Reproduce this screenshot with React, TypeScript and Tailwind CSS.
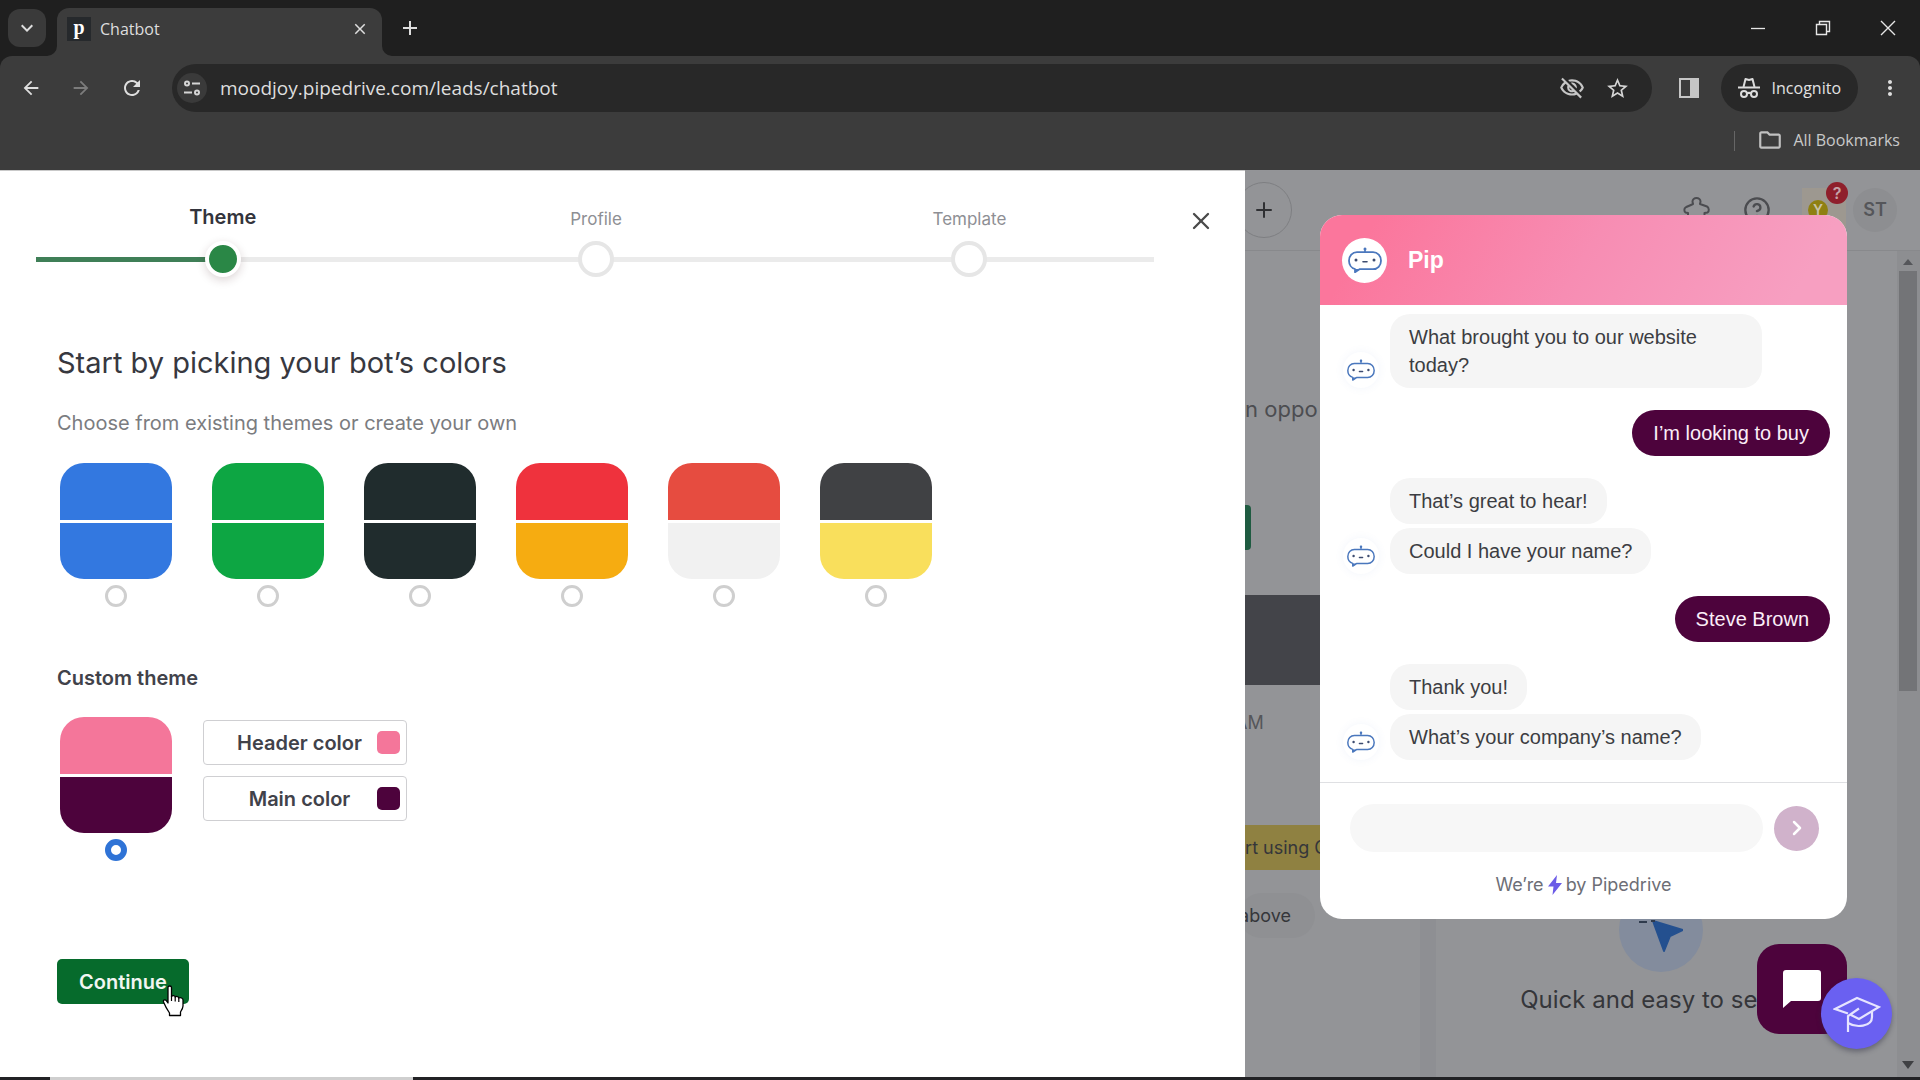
import { useState } from "react";
import type { ReactNode } from "react";
import {
  MdAdd,
  MdArrowBack,
  MdArrowForward,
  MdClose,
  MdExpandMore,
  MdMoreVert,
  MdOutlineFolder,
  MdOutlineVisibilityOff,
  MdRefresh,
  MdStarBorder,
} from "react-icons/md";
import { ChevronRight, CircleHelp, Plus, X } from "lucide-react";

function Robot({ className }: { className: string }) {
  return (
    <svg viewBox="0 0 34 26" className={className} fill="none" aria-hidden="true">
      <path d="M17 1.500v3.500" stroke="#4a77bd" strokeWidth="1.600" strokeLinecap="round" />
      <circle cx="17" cy="1.900" r="1.500" fill="#4a77bd" />
      <path
        d="M9 5.200h16c4.600 0 8 3.600 8 8.500s-3.400 8.500-8 8.500H11.500L7 25.200v-3.200C3.500 21 1 17.600 1 13.700c0-4.900 3.400-8.500 8-8.500z"
        stroke="#4a77bd"
        strokeWidth="1.800"
        strokeLinejoin="round"
      />
      <path d="M7 22h5l-5 3.200z" fill="#4a77bd" />
      <circle cx="8" cy="13" r="1.500" fill="#3d4c70" />
      <circle cx="26" cy="13" r="1.500" fill="#3d4c70" />
      <path d="M15 14.800h4" stroke="#3d4c70" strokeWidth="1.600" strokeLinecap="round" />
    </svg>
  );
}

function SiteControlsIcon() {
  return (
    <svg viewBox="0 0 20 20" className="size-5" fill="none" stroke="#d5d5d5" strokeWidth="2" aria-hidden="true">
      <circle cx="5" cy="5.500" r="2" />
      <path d="M10 5.500h8M2 14.500h8" />
      <circle cx="15" cy="14.500" r="2" />
    </svg>
  );
}

function IncognitoIcon() {
  return (
    <svg viewBox="0 0 22 22" className="size-[22px]" fill="none" stroke="#dcdcdc" strokeWidth="2" aria-hidden="true">
      <path d="M0 10.500h22" />
      <path d="M5.500 10L7.500 2l3.500 1 3.500-1L16.500 10" strokeLinejoin="round" />
      <circle cx="6" cy="17" r="3" />
      <circle cx="16" cy="17" r="3" />
      <path d="M8.800 16.500c1.400-.8 3-.8 4.400 0" />
    </svg>
  );
}

function SidePanelIcon() {
  return (
    <svg viewBox="0 0 22 22" className="size-[22px]" aria-hidden="true">
      <rect x="2" y="2" width="18" height="18" fill="none" stroke="#c6c6c6" strokeWidth="2" />
      <rect x="12" y="2" width="8" height="18" fill="#c6c6c6" />
    </svg>
  );
}

function PuzzleIcon() {
  return (
    <svg viewBox="0 0 28 28" className="size-7" fill="none" stroke="currentColor" strokeWidth="2" aria-hidden="true">
      <path
        d="M10 8c0-1-.5-1.500-.5-2.500C9.500 3.500 11.300 2 13.500 2s4 1.500 4 3.500c0 1-.5 1.500-.5 2.500l7 2.500c2 1 2.500 5 .5 6l-3 .5v8H5v-8l-2.500-.5c-1.500-1-1.500-4 0-5C4 10.500 7 9.500 10 8z"
        strokeLinejoin="round"
      />
    </svg>
  );
}

function PipedriveIcon() {
  return (
    <span className="flex size-6 items-center justify-center bg-[#26292c] pb-1 font-['Liberation_Serif',serif] text-xl leading-5 font-bold text-white">
      p
    </span>
  );
}

function Flare({ className }: { className: string }) {
  return (
    <svg viewBox="0 0 10 10" className={className} aria-hidden="true">
      <path d="M10 0v10H0A10 10 0 0 0 10 0z" fill="#3c3c3c" />
    </svg>
  );
}

function BrowserChrome() {
  return (
    <header className="bg-[#1f1f1f] font-['Open_Sans','Noto_Sans',sans-serif] text-[#dedede]">
      <div className="flex h-14 items-center">
        <button
          type="button"
          aria-label="Search tabs"
          className="ml-2 flex h-[38px] w-[38px] items-center justify-center rounded-xl bg-[#3a3a3a]"
        >
          <MdExpandMore className="size-6" />
        </button>
        <div className="relative ml-[11px] flex h-12 w-[325px] items-center self-end rounded-t-xl bg-[#3c3c3c] pr-[13px] pb-[6px] pl-[10px]">
          <Flare className="absolute bottom-0 -left-[10px] size-[10px]" />
          <Flare className="absolute -right-[10px] bottom-0 size-[10px] -scale-x-100" />
          <PipedriveIcon />
          <span className="ml-[9px] flex-1 text-base">Chatbot</span>
          <button type="button" aria-label="Close tab">
            <MdClose className="size-[18px]" />
          </button>
        </div>
        <button type="button" aria-label="New tab" className="ml-4">
          <MdAdd className="size-6" />
        </button>
        <div className="ml-auto flex items-center gap-[49px] pr-6">
          <button type="button" aria-label="Minimize">
            <svg viewBox="0 0 16 16" className="size-4" stroke="#e6e6e6" strokeWidth="1.300">
              <path d="M1 8.500h14" />
            </svg>
          </button>
          <button type="button" aria-label="Restore">
            <svg viewBox="0 0 16 16" className="size-4" fill="none" stroke="#e6e6e6" strokeWidth="1.400">
              <path d="M1.500 4.500h10v10h-10zM4.500 4.500v-3h10v10h-3" />
            </svg>
          </button>
          <button type="button" aria-label="Close window">
            <svg viewBox="0 0 16 16" className="size-4" stroke="#e6e6e6" strokeWidth="1.400">
              <path d="M1 1l14 14M15 1L1 15" />
            </svg>
          </button>
        </div>
      </div>
      <div className="rounded-t-xl bg-[#3c3c3c]">
        <div className="flex h-16 items-center pr-[18px] pl-5">
          <button type="button" aria-label="Back">
            <MdArrowBack className="size-[22px]" />
          </button>
          <button type="button" aria-label="Forward" className="ml-7" disabled>
            <MdArrowForward className="size-[22px] text-[#7c7c7c]" />
          </button>
          <button type="button" aria-label="Reload" className="ml-7">
            <MdRefresh className="size-6" />
          </button>
          <div className="ml-7 flex h-12 flex-1 items-center rounded-full bg-[#282828] pr-[22px] pl-[5px]">
            <button
              type="button"
              aria-label="View site information"
              className="flex size-[30px] items-center justify-center rounded-full bg-[#3a3a3a]"
            >
              <SiteControlsIcon />
            </button>
            <input
              aria-label="Address"
              className="ml-[13px] flex-1 bg-transparent text-[19px] text-[#dedede] outline-none"
              defaultValue="moodjoy.pipedrive.com/leads/chatbot"
            />
            <MdOutlineVisibilityOff className="size-[26px] text-[#c6c6c6]" />
            <button type="button" aria-label="Bookmark this tab" className="ml-5">
              <MdStarBorder className="size-[25px] text-[#d6d6d6]" />
            </button>
          </div>
          <button type="button" aria-label="Side panel" className="ml-[26px]">
            <SidePanelIcon />
          </button>
          <button
            type="button"
            className="ml-[21px] flex h-12 items-center gap-3 rounded-full bg-[#282828] px-[17px] text-base text-[#e2e2e2]"
          >
            <IncognitoIcon />
            Incognito
          </button>
          <button type="button" aria-label="Menu" className="ml-5">
            <MdMoreVert className="size-6" />
          </button>
        </div>
        <div className="flex h-[50px] items-start justify-end pt-[7px] pr-5">
          <span className="mt-1 h-5 w-px bg-[#666]" />
          <a href="#bookmarks" className="ml-[22px] flex items-center gap-[10px] text-base text-[#c9c9c9]">
            <MdOutlineFolder className="size-[26px] text-[#c0c0c0]" />
            All Bookmarks
          </a>
        </div>
      </div>
    </header>
  );
}

const steps = ["Theme", "Profile", "Template"];

function Stepper() {
  return (
    <ol className="relative grid flex-1 grid-cols-3">
      <li aria-hidden="true" className="absolute top-[52px] right-[2px] left-0 flex h-[5px] bg-[#ebebeb]">
        <span className="w-1/6 bg-[#3f7f57]" />
      </li>
      {steps.map((step, i) => (
        <li key={step} className="relative flex flex-col items-center">
          <span
            className={
              i === 0
                ? "h-9 text-[20px] leading-6 font-semibold text-[#33343c]"
                : "h-9 text-[17px] leading-7 text-[#8e8f94]"
            }
          >
            {step}
          </span>
          <span
            className={
              i === 0
                ? "size-9 rounded-full border-4 border-white bg-[#2a8746] shadow-[0_3px_10px_rgba(60,20,30,0.18)]"
                : "size-9 rounded-full border-4 border-[#e6e6e6] bg-white"
            }
          />
        </li>
      ))}
    </ol>
  );
}

const themes = [
  { id: "blue", top: "bg-[#3378e0]", bottom: "bg-[#3378e0]" },
  { id: "green", top: "bg-[#0da643]", bottom: "bg-[#0da643]" },
  { id: "dark", top: "bg-[#202c2d]", bottom: "bg-[#202c2d]" },
  { id: "red and orange", top: "bg-[#ef323d]", bottom: "bg-[#f6ac11]" },
  { id: "coral and grey", top: "bg-[#e64c40]", bottom: "bg-[#f1f1f1]" },
  { id: "charcoal and yellow", top: "bg-[#404144]", bottom: "bg-[#f9df5c]" },
];

type SwatchProps = {
  id: string;
  top: string;
  bottom: string;
  checked: boolean;
  onPick: (id: string) => void;
};

function Swatch({ id, top, bottom, checked, onPick }: SwatchProps) {
  return (
    <label className="flex w-28 flex-col items-center">
      <span className="flex h-[116px] w-full flex-col gap-[3px] overflow-hidden rounded-3xl">
        <span className={`flex-1 ${top}`} />
        <span className={`flex-1 ${bottom}`} />
      </span>
      <input
        type="radio"
        name="theme"
        aria-label={`${id} theme`}
        checked={checked}
        onChange={() => onPick(id)}
        className="mt-[6px] size-[22px] appearance-none rounded-full border-[3px] border-[#cfcfcf] bg-white checked:border-[6px] checked:border-[#2f73d6]"
      />
    </label>
  );
}

function ColorButton({ label, color }: { label: string; color: string }) {
  return (
    <button
      type="button"
      className="flex h-[45px] w-[204px] items-center rounded border border-[#cfcfd2] pr-[6px] pl-[18px] text-[20px] font-semibold text-[#41424a]"
    >
      <span className="flex-1 text-center">{label}</span>
      <span className={`size-[23px] rounded-[5px] ${color}`} />
    </button>
  );
}

function HandCursor() {
  return (
    <svg viewBox="0 0 24 32" className="absolute top-[26px] left-[105px] h-8 w-6" aria-hidden="true">
      <path
        d="M6 2.500c0-2 3.500-2 3.500 0v9c.5-1.300 3.500-1.200 3.700.5 1-1 3.500-.6 3.600 1 1.500-.7 4.200 0 4.200 2v6c0 2-1.500 4.500-2.500 6v3.500H7.500V28C5.500 25 3.500 22 1.500 17c-.6-2 1.700-3 3-1.200L6 18z"
        fill="#fff"
        stroke="#000"
        strokeWidth="1.300"
        strokeLinejoin="round"
      />
      <path d="M9.500 11v5M13.200 12v4.500M16.800 13v4" stroke="#000" strokeWidth="1.200" />
    </svg>
  );
}

function ThemeDrawer() {
  const [picked, setPicked] = useState("custom");
  return (
    <section
      aria-label="Chatbot theme"
      className="flex w-[64.85%] flex-col border-t border-[#c9c9c9] bg-white font-['Inter',sans-serif]"
    >
      <div className="flex items-start gap-[31px] pt-[34px] pr-[30px] pl-9">
        <Stepper />
        <button type="button" aria-label="Close" className="mt-[2px] text-[#4a4a4a]">
          <X className="size-7" strokeWidth={2} />
        </button>
      </div>
      <div className="px-[57px] pt-[68px]">
        <h1 className="text-[29px] leading-9 text-[#37383f]">Start by picking your bot’s colors</h1>
        <p className="mt-7 text-[20px] leading-7 text-[#7b7c80]">Choose from existing themes or create your own</p>
        <div className="mt-[26px] ml-[3px] flex gap-10">
          {themes.map((t) => (
            <Swatch key={t.id} {...t} checked={picked === t.id} onPick={setPicked} />
          ))}
        </div>
        <h2 className="mt-[57px] text-[20px] leading-7 font-semibold text-[#41424a]">Custom theme</h2>
        <div className="mt-[25px] ml-[3px] flex gap-[31px]">
          <Swatch
            id="custom"
            top="bg-[#f4769a]"
            bottom="bg-[#4d033c]"
            checked={picked === "custom"}
            onPick={setPicked}
          />
          <div className="flex flex-col gap-[11px] pt-[3px]">
            <ColorButton label="Header color" color="bg-[#f4769a]" />
            <ColorButton label="Main color" color="bg-[#4d033c]" />
          </div>
        </div>
        <div className="relative mt-[98px] w-fit">
          <button
            type="button"
            className="h-[45px] w-[132px] rounded-[5px] bg-[#066b2c] text-[20px] font-semibold text-[#f1f6f2]"
          >
            Continue
          </button>
          <HandCursor />
        </div>
      </div>
    </section>
  );
}

function BotGroup({ children }: { children: ReactNode }) {
  return (
    <div className="flex items-end gap-[11px]">
      <span className="flex size-9 items-center justify-center rounded-full shadow-[0_0_8px_rgba(90,130,200,0.08)]">
        <Robot className="h-[22px] w-7" />
      </span>
      <div className="flex flex-col items-start gap-1">{children}</div>
    </div>
  );
}

function BotBubble({ children }: { children: ReactNode }) {
  return <p className="max-w-[372px] rounded-[20px] bg-[#f5f5f5] px-[19px] py-[9px] text-[#3c3d42]">{children}</p>;
}

function UserBubble({ children }: { children: ReactNode }) {
  return <p className="self-end rounded-full bg-[#4d033c] px-[21px] py-[9px] text-[#fbeef8]">{children}</p>;
}

function ChatPreview() {
  return (
    <section
      aria-label="Chat preview"
      className="absolute top-[45px] right-[73px] w-[527px] overflow-hidden rounded-[22px] bg-white font-['Liberation_Sans',Arial,sans-serif]"
    >
      <div className="flex h-[90px] items-center gap-[21px] bg-[linear-gradient(120deg,#fb769c_10%,#f78db3_50%,#f79fc1_90%)] px-[22px]">
        <span className="flex size-[45px] items-center justify-center rounded-full bg-white">
          <Robot className="h-[26px] w-[34px]" />
        </span>
        <h2 className="text-[23px] font-bold text-white">Pip</h2>
      </div>
      <div className="flex flex-col gap-[22px] border-b border-[#dfe0e3] pt-[9px] pr-[17px] pb-[22px] pl-[23px] text-[20px] leading-7">
        <BotGroup>
          <BotBubble>What brought you to our website today?</BotBubble>
        </BotGroup>
        <UserBubble>I’m looking to buy</UserBubble>
        <BotGroup>
          <BotBubble>That’s great to hear!</BotBubble>
          <BotBubble>Could I have your name?</BotBubble>
        </BotGroup>
        <UserBubble>Steve Brown</UserBubble>
        <BotGroup>
          <BotBubble>Thank you!</BotBubble>
          <BotBubble>What’s your company’s name?</BotBubble>
        </BotGroup>
      </div>
      <div className="flex items-center gap-[11px] pt-[21px] pr-7 pl-[30px]">
        <input aria-label="Message" className="h-12 min-w-0 flex-1 rounded-full bg-[#f7f7f7] px-5 outline-none" />
        <button
          type="button"
          aria-label="Send"
          className="flex size-[45px] items-center justify-center rounded-full bg-[#d0b2cb] text-white"
        >
          <ChevronRight className="size-6" strokeWidth={2.5} />
        </button>
      </div>
      <p className="flex items-center justify-center pt-[21px] pb-[22px] font-['Inter',sans-serif] text-[18px] leading-6 text-[#6d6e76]">
        We’re
        <svg viewBox="0 0 14 20" className="mx-1 h-5 w-[14px]" aria-hidden="true">
          <path d="M9 0L0 11.500h5.500L4.500 20 14 8H8z" fill="#6c5ce7" />
        </svg>
        by Pipedrive
      </p>
    </section>
  );
}

function PageHeader() {
  return (
    <div className="flex h-[81px] items-center border-b border-[#88898c]">
      <button
        type="button"
        aria-label="Quick add"
        className="-ml-[9px] flex size-14 items-center justify-center rounded-full border border-[#7e7f82] text-[#2f3033]"
      >
        <Plus className="size-6" strokeWidth={2} />
      </button>
      <div className="ml-auto flex items-center pr-[23px] text-[#4b4c50]">
        <PuzzleIcon />
        <CircleHelp className="ml-8 size-7" strokeWidth={2} />
        <span className="relative ml-[31px] flex h-11 w-11 items-center bg-[#9d9890] pl-[6px]">
          <span className="flex size-5 items-center justify-center rounded-full bg-[#8f8012] text-sm font-semibold text-[#c9c3a8]">
            Y
          </span>
          <span className="absolute -top-[6px] -right-[2px] flex size-[22px] items-center justify-center rounded-full bg-[#8f1f2b] text-base font-semibold text-[#c5a3a8]">
            ?
          </span>
        </span>
        <span className="ml-[7px] flex size-11 items-center justify-center rounded-full bg-[#8d8e91] text-lg font-semibold text-[#55565a]">
          ST
        </span>
      </div>
    </div>
  );
}

function DimmedPage() {
  return (
    <div className="flex h-full flex-col bg-[#939497] font-['Inter',sans-serif] text-[#35363a]">
      <PageHeader />
      <div className="flex min-h-0 flex-1">
        <div className="w-[175px] shrink-0 overflow-hidden text-[18px] leading-[45px] whitespace-nowrap">
          <p className="mt-[136px] text-[22px] text-[#4c4d51]">n oppo</p>
          <div className="mt-[73px] h-[45px] w-[6px] rounded-r bg-[#1f5b41]" />
          <div className="mt-[45px] h-[90px] bg-[#434449]" />
          <p className="mt-[15px] -ml-[10px] text-[#55565a]">AM</p>
          <p className="mt-20 bg-[#8f8141]">rt using C</p>
          <p className="mt-[23px] -ml-[6px] w-[76px] rounded-full bg-[#8f9093]">above</p>
        </div>
        <div className="mt-[667px] w-4 bg-[#8e8f93]" />
        <div className="flex flex-1 flex-col items-center overflow-hidden pt-[637px] pr-[12px]">
          <span className="flex size-[84px] items-center justify-center rounded-full bg-[#838c9d]">
            <svg viewBox="0 0 44 44" className="size-11" aria-hidden="true">
              <path d="M14 13l30 9-13 6-6 15z" fill="#24508f" stroke="#24508f" strokeWidth="2" strokeLinejoin="round" />
              <path d="M0 14h8M12 13h4" stroke="#2f3b4d" strokeWidth="2" />
            </svg>
          </span>
          <p className="mt-[10px] text-[24px] leading-9">Quick and easy to set up</p>
        </div>
        <div className="flex w-[23px] flex-col items-center bg-[#8d8e91] pt-2 pr-[2px] pb-2">
          <span className="border-x-[5px] border-b-[6px] border-transparent border-b-[#55565a]" />
          <span className="mt-[6px] h-[420px] w-[18px] bg-[#737477]" />
          <span className="mt-auto border-x-[6px] border-t-[8px] border-transparent border-t-[#3f4043]" />
        </div>
      </div>
    </div>
  );
}

function FloatingButtons() {
  return (
    <>
      <button
        type="button"
        aria-label="Open chat"
        className="absolute right-[73px] bottom-[43px] flex size-[90px] items-center justify-center rounded-[22px] bg-[#4d033c]"
      >
        <svg viewBox="0 0 38 38" className="size-[38px]" aria-hidden="true">
          <path d="M3 0h32a3 3 0 0 1 3 3v25a3 3 0 0 1-3 3H8l-8 7V3a3 3 0 0 1 3-3z" fill="#fff" />
        </svg>
      </button>
      <button
        type="button"
        aria-label="Academy"
        className="absolute right-[28px] bottom-[28px] flex size-[71px] items-center justify-center rounded-full bg-[#6a60f1] shadow-[0_3px_5px_rgba(40,40,60,0.4)]"
      >
        <svg viewBox="0 0 48 36" className="h-9 w-12" fill="none" stroke="#e6e4ff" strokeWidth="2.200" aria-hidden="true">
          <path d="M15 36V20L26 12.500M15 17.500L2 13 24 2l22 9-20 12-8-4" />
          <path d="M39 16v5c0 10-16 11-24 6" />
        </svg>
      </button>
    </>
  );
}

export default function App() {
  return (
    <div className="flex h-screen flex-col overflow-hidden">
      <BrowserChrome />
      <main className="flex min-h-0 flex-1">
        <ThemeDrawer />
        <div className="relative min-w-0 flex-1 overflow-hidden">
          <DimmedPage />
          <ChatPreview />
          <FloatingButtons />
        </div>
      </main>
      <footer className="flex h-[3px] shrink-0 bg-[#222225] pl-[50px]">
        <span className="w-[363px] bg-[#cfcfcf]" />
      </footer>
    </div>
  );
}
